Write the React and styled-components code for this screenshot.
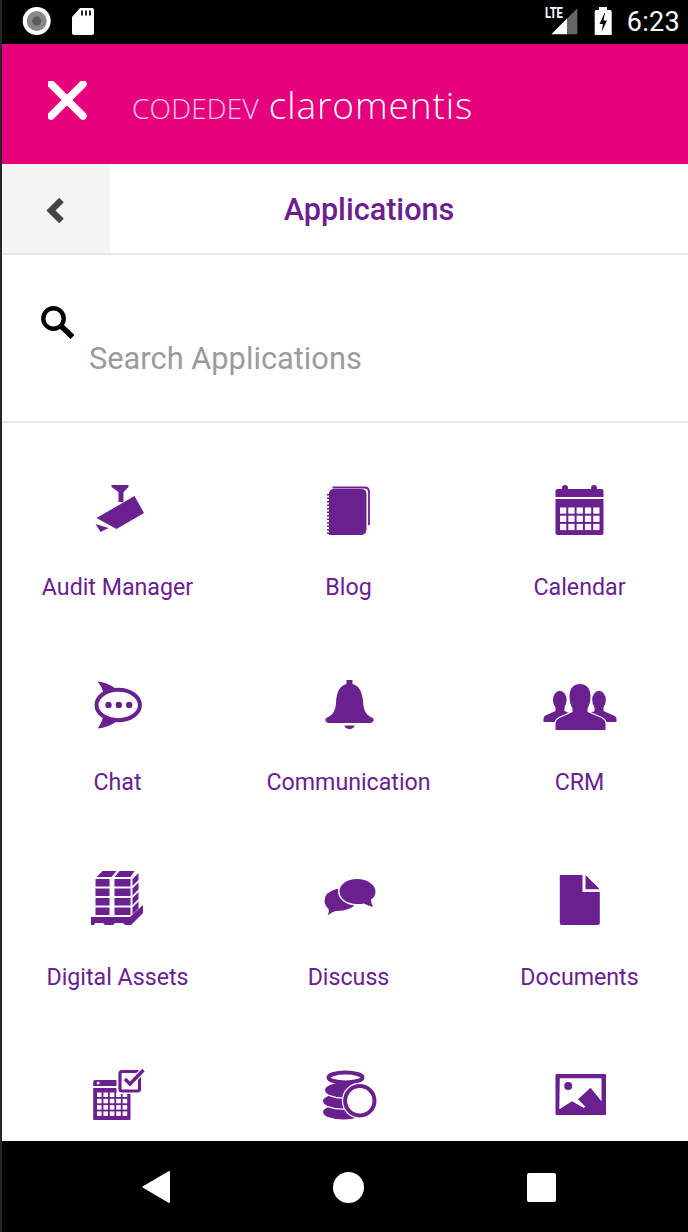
import React from "react";
import styled, { createGlobalStyle } from "styled-components";

const purple = "#6b2090";

const GlobalStyle = createGlobalStyle`
  html, body {
    margin: 0;
    padding: 0;
    background: #fff;
    overflow: hidden;
  }
  * {
    box-sizing: border-box;
  }
`;

// icons are drawn in the coordinates of a 80x64 box per cell, offset through viewBox
const AuditIcon = () => (
  <Glyph viewBox="77.5 478 80 64">
    <path d="M111 485h17v2l-5 5v10h-5v-10l-7-5z" />
    <path d="M96 518l38-22 9.500 17-27.500 16z" />
    <path d="M95 524l13 4-8 4z" />
  </Glyph>
);

const BlogIcon = () => {
  const ticks = [0, 1, 2, 3, 4, 5, 6, 7, 8, 9, 10, 11];
  return (
    <Glyph viewBox="308.500 478 80 64">
      <path d="M332 487.500h32q4.500 0 4.500 4.500v33" fill="none" stroke={purple} strokeWidth="1.800" />
      <path d="M328.500 494q0-5 5-5h27q5.500 0 5.500 5v35q0 6-6 6h-31.500z" />
      {ticks.map((t) => (
        <rect key={t} x="326.500" y={494 + t * 3.5} width="3" height="1.500" />
      ))}
    </Glyph>
  );
};

const CalendarIcon = () => {
  const cols = [0, 1, 2, 3, 4];
  const rows = [0, 1, 2];
  return (
    <Glyph viewBox="539.500 478 80 64">
      <circle cx="564.500" cy="488" r="3" />
      <circle cx="593.500" cy="488" r="3" />
      <path d="M555 497v-6q0-2 2-2h44q2 0 2 2v6z" />
      <path d="M555 499h48v34q0 2-2 2h-44q-2 0-2-2z" />
      {rows.map((r) =>
        cols.map((c) => (
          <rect key={`${r}-${c}`} x={559.5 + c * 8.3} y={507.5 + r * 8.2} width="6.300" height="6.200" fill="#fff" />
        ))
      )}
    </Glyph>
  );
};

const ChatIcon = () => (
  <Glyph viewBox="77.500 673 80 64">
    <path d="M97 681.500q10 1 18 7l-11 10q-1-10-7-17z" />
    <path d="M97 728.500q5-6 6-15l13 8q-8 6-19 7z" />
    <ellipse cx="117.700" cy="705" rx="21.700" ry="15.200" fill="#fff" stroke={purple} strokeWidth="4" />
    <circle cx="108" cy="705" r="3.200" />
    <circle cx="118.300" cy="705" r="3.200" />
    <circle cx="128.700" cy="705" r="3.200" />
  </Glyph>
);

const BellIcon = () => (
  <Glyph viewBox="308.500 673 80 64">
    <path d="M346 680h6v4C358 685.500 362 691 362.700 703C363.200 712 367 716 372.500 718Q374.500 722 370 723H328Q323.500 722 325.500 718C331 716 335 712 335.500 703C336 691 340 685.500 346 684z" />
    <path d="M344 725.500h10a5 3.500 0 0 1-10 0z" />
  </Glyph>
);

const CrmIcon = () => (
  <Glyph viewBox="539.500 673 80 64">
    <ellipse cx="559.300" cy="700" rx="6.800" ry="9.300" />
    <path d="M555 706h9v5l9 4v7h-30v-3q0-3 3-4l9-4z" />
    <ellipse cx="598.500" cy="700" rx="6.800" ry="9.300" />
    <path d="M594 706h9v5l9 4q4 1 4 4v3h-30v-7l8-4z" />
    <path
      d="M572 708q-3-4-3-12c0-8 4.500-12 10.500-12s10.500 4 10.500 12q0 8-3 12v4l14 6q4 2 4 6v6h-50v-6q0-4 4-6l13-6z"
      stroke="#fff"
      strokeWidth="2.400"
      paintOrder="stroke"
    />
  </Glyph>
);

const AssetsIcon = () => {
  const rows = [879, 888.5, 898, 907.5];
  return (
    <Glyph viewBox="77.500 868 80 64">
      <path d="M96 877l6-6h14l-5 6zM114 877l5-6h15l-4 6z" />
      {rows.map((y) => (
        <g key={y}>
          <rect x="95" y={y} width="14" height="7.500" />
          <rect x="114" y={y} width="16" height="7.500" />
          <path d={`M132 ${y + 7}v-7l6-6v7z`} />
        </g>
      ))}
      <path d="M90.500 917h39l13-12v8l-12 12h-6l-2-2h-8l-2 2h-8l-2-2h-8l-1 2h-3z" />
    </Glyph>
  );
};

const DiscussIcon = () => (
  <Glyph viewBox="308.500 868 80 64">
    <path d="M327 915.500q2-4 1-6.500q-4-4-4-8q0-9 12-12q14 0 20 14q-6 8-20 8q-3 0-9 4.500z" />
    <path
      d="M372.500 907q-6-2-9-3.500q-2 .5-7 .5c-10 0-17.500-5.500-17.500-12.500s7.500-12.500 17.500-12.500s18.500 5.500 18.500 12.500q0 5-4.500 8q0 4 2 7.500z"
      stroke="#fff"
      strokeWidth="3"
      paintOrder="stroke"
    />
  </Glyph>
);

const DocumentIcon = () => (
  <Glyph viewBox="539.500 868 80 64">
    <path d="M559.300 875H582v17h17.300v31q0 2-2 2h-36q-2 0-2-2z" />
    <path d="M585 875l14.300 14.300H585z" />
  </Glyph>
);

const PlannerIcon = () => {
  const cols = [0, 1, 2, 3, 4];
  const rows = [0, 1, 2, 3];
  return (
    <Glyph viewBox="77.500 1063 80 64">
      <path d="M92.700 1082q0-2 2-2h22.300v6h-24.300z" />
      <circle cx="97.700" cy="1083" r="1.500" fill="#fff" />
      <path d="M92.700 1088h37.300v31q0 1-1 1h-35.300q-1 0-1-1z" />
      {rows.map((r) =>
        cols.map((c) => (
          <rect key={`${r}-${c}`} x={96.5 + c * 6.4} y={1092.5 + r * 6.3} width="4.600" height="4.500" fill="#fff" />
        ))
      )}
      <rect x="116" y="1068" width="26" height="26" rx="3" fill="#fff" />
      <rect x="119.500" y="1071.500" width="19.500" height="19.500" rx="2" fill="#fff" stroke={purple} strokeWidth="3.200" />
      <path d="M124.500 1079l5 5 13.500-14" fill="none" stroke="#fff" strokeWidth="6" />
      <path d="M124.500 1079l5 5 13.500-14" fill="none" stroke={purple} strokeWidth="3.400" />
    </Glyph>
  );
};

const CoinsIcon = () => (
  <Glyph viewBox="308.500 1063 80 64">
    <ellipse cx="343" cy="1112" rx="20.500" ry="7.500" />
    <ellipse cx="342.500" cy="1101" rx="20" ry="7.500" stroke="#fff" strokeWidth="2.400" paintOrder="stroke" />
    <ellipse cx="343.500" cy="1090" rx="19" ry="7.500" stroke="#fff" strokeWidth="2.400" paintOrder="stroke" />
    <ellipse cx="345" cy="1077.500" rx="17" ry="5" fill="#fff" stroke={purple} strokeWidth="4" />
    <circle cx="359.300" cy="1100.700" r="18" fill="#fff" />
    <circle cx="359.300" cy="1100.700" r="14.700" fill="#fff" stroke={purple} strokeWidth="4" />
  </Glyph>
);

const ImageIcon = () => (
  <Glyph viewBox="539.500 1063 80 64">
    <rect x="555" y="1074" width="50.500" height="41" rx="1" />
    <path d="M559.300 1078.300h41.700v23l-11-13.500-12.500 11.500 7.500 7.500-2 1-11.500-6.500-12.700 8z" fill="#fff" />
    <circle cx="567.700" cy="1086" r="4" />
  </Glyph>
);

const APPS = [
  { label: "Audit Manager", Icon: AuditIcon },
  { label: "Blog", Icon: BlogIcon },
  { label: "Calendar", Icon: CalendarIcon },
  { label: "Chat", Icon: ChatIcon },
  { label: "Communication", Icon: BellIcon },
  { label: "CRM", Icon: CrmIcon },
  { label: "Digital Assets", Icon: AssetsIcon },
  { label: "Discuss", Icon: DiscussIcon },
  { label: "Documents", Icon: DocumentIcon },
  { Icon: PlannerIcon },
  { Icon: CoinsIcon },
  { Icon: ImageIcon },
];

const App = () => {
  return (
    <Page>
      <GlobalStyle />
      <StatusBar>
        <StatusGroup>
          <svg width="60" height="44" viewBox="0 0 60 44">
            <circle cx="36.700" cy="21" r="14" fill="#fff" />
            <circle cx="36.700" cy="21" r="10" fill="#888" />
            <circle cx="36.700" cy="21" r="4.500" fill="#5c5c5c" />
          </svg>
          <svg width="40" height="44" viewBox="60 0 40 44">
            <path d="M80 8h12q2 0 2 2v23q0 2-2 2H74q-2 0-2-2V17z" fill="#fff" />
            <path d="M81 10.500h2v5h-2zM85 10.500h2v5h-2zM89 10.500h2v5h-2z" fill="#222" />
          </svg>
        </StatusGroup>
        <StatusGroup>
          <LteText>LTE</LteText>
          <svg width="68" height="44" viewBox="546 0 68 44">
            <path d="M578.300 8.300v26h-10.300v-15.700z" fill="#666" />
            <path d="M568 18.600v15.700h-15.700z" fill="#fff" />
            <path d="M600 10v-3h8v3h3q1.700 0 1.700 1.700v23.300h-17v-23.300q0-1.700 1.700-1.700z" fill="#fff" />
            <path d="M605.500 13l-5 11h3.500l-1.500 8 5.500-11.500h-3.500l1.500-7.500z" fill="#000" />
          </svg>
          <Clock>6:23</Clock>
        </StatusGroup>
      </StatusBar>

      <Header>
        <svg width="40" height="40" viewBox="48 81 40 40">
          <path d="M51 84l32 32M83 84l-32 32" stroke="#fff" strokeWidth="7.500" strokeLinecap="round" fill="none" />
        </svg>
        <Logo>
          <LogoLight>CODEDEV</LogoLight>
          <LogoBold>claromentis</LogoBold>
        </Logo>
      </Header>

      <TitleBar>
        <BackButton>
          <svg width="20" height="30" viewBox="0 0 20 30">
            <path d="M15.500 4L5 14.500 15.500 25" fill="none" stroke="#444" strokeWidth="6.500" />
          </svg>
        </BackButton>
        <Title>Applications</Title>
      </TitleBar>

      <SearchPanel>
        <svg width="36" height="36" viewBox="0 0 36 36">
          <circle cx="13.500" cy="13.500" r="10.200" fill="none" stroke="#000" strokeWidth="4.400" />
          <path d="M21 21L32.500 32" stroke="#000" strokeWidth="5.500" fill="none" />
        </svg>
        <SearchInput placeholder="Search Applications" readOnly />
      </SearchPanel>

      <Content>
        <AppGrid>
          {APPS.map(({ label, Icon }, i) => (
            <AppCell key={i}>
              <Icon />
              {label && <AppLabel>{label}</AppLabel>}
            </AppCell>
          ))}
        </AppGrid>
      </Content>

      <NavBar>
        <NavButton>
          <svg width="32" height="36" viewBox="0 0 32 36">
            <path d="M3.500 18L29 3v30z" fill="#fff" stroke="#fff" strokeWidth="2" strokeLinejoin="round" />
          </svg>
        </NavButton>
        <NavButton>
          <NavDot />
        </NavButton>
        <NavButton>
          <NavSquare />
        </NavButton>
      </NavBar>
    </Page>
  );
};

const Page = styled.div`
  width: 688px;
  height: 1232px;
  display: flex;
  flex-direction: column;
  border-left: 2px solid #262626;
  overflow: hidden;
  background: #fff;
  font-family: Roboto, "Liberation Sans", sans-serif;
`;

const StatusBar = styled.div`
  flex: none;
  height: 44px;
  margin-left: -2px;
  background: #000;
  display: flex;
  justify-content: space-between;
  color: #fff;
`;

const StatusGroup = styled.div`
  display: flex;
  align-items: center;
  position: relative;
`;

const LteText = styled.span`
  position: absolute;
  left: 0;
  top: 5px;
  font-size: 14px;
  font-weight: 700;
  letter-spacing: -0.2px;
  transform: scaleX(0.8);
  transform-origin: left;
`;

const Clock = styled.span`
  font-size: 27px;
  margin-left: 14px;
  margin-right: 8px;
  letter-spacing: 0.3px;
`;

const Header = styled.div`
  flex: none;
  height: 120px;
  background: #e6007e;
  display: flex;
  align-items: flex-start;
  padding: 37px 0 0 46px;
`;

const Logo = styled.div`
  display: flex;
  align-items: baseline;
  gap: 10px;
  margin: -1px 0 0 44px;
  color: #fff;
  font-family: "Open Sans", sans-serif;
  font-weight: 300;
  line-height: 50px;
`;

const LogoLight = styled.span`
  font-size: 28px;
  letter-spacing: 0.2px;
  opacity: 0.8;
`;

const LogoBold = styled.span`
  font-size: 37px;
  letter-spacing: 0.9px;
`;

const TitleBar = styled.div`
  flex: none;
  height: 91px;
  display: flex;
  border-bottom: 2px solid #e6e6e6;
`;

const BackButton = styled.div`
  width: 108px;
  background: #f5f5f5;
  display: flex;
  align-items: center;
  justify-content: center;
  padding-top: 4px;
`;

const Title = styled.h1`
  flex: 1;
  margin: 0;
  text-align: center;
  color: ${purple};
  font-size: 30.600px;
  font-weight: 500;
  line-height: 88px;
  padding: 2px 60px 0 0;
`;

const SearchPanel = styled.div`
  flex: none;
  height: 168px;
  padding: 50px 0 0 38px;
  border-bottom: 2px solid #e6e6e6;
`;

const SearchInput = styled.input`
  display: block;
  width: 500px;
  margin: -7px 0 0 49px;
  border: none;
  outline: none;
  padding: 0;
  height: 40px;
  font-family: Roboto, sans-serif;
  font-size: 30.800px;
  color: #333;
  background: transparent;

  &::placeholder {
    color: #9b9b9b;
    opacity: 1;
  }
`;

const Content = styled.div`
  flex: 1;
  min-height: 0;
  overflow: hidden;
  padding-top: 55px;
`;

const AppGrid = styled.div`
  display: grid;
  grid-template-columns: repeat(3, 231px);
  grid-auto-rows: 195px;
`;

const AppCell = styled.div`
  display: flex;
  flex-direction: column;
  align-items: center;
`;

const Glyph = styled.svg`
  flex: none;
  display: block;
  width: 80px;
  height: 64px;
  fill: ${purple};
`;

const AppLabel = styled.div`
  margin-top: 31px;
  color: ${purple};
  font-size: 23.200px;
  line-height: 28px;
  white-space: nowrap;
`;

const NavBar = styled.div`
  flex: none;
  height: 91px;
  margin-left: -2px;
  background: #000;
  display: grid;
  grid-template-columns: repeat(3, 192.500px);
  padding-left: 60px;
`;

const NavButton = styled.div`
  display: flex;
  align-items: center;
  justify-content: center;
  padding-top: 1px;
`;

const NavDot = styled.div`
  width: 31px;
  height: 31px;
  border-radius: 50%;
  background: #fff;
`;

const NavSquare = styled.div`
  width: 29px;
  height: 29px;
  border-radius: 2px;
  background: #fff;
`;

export default App;
